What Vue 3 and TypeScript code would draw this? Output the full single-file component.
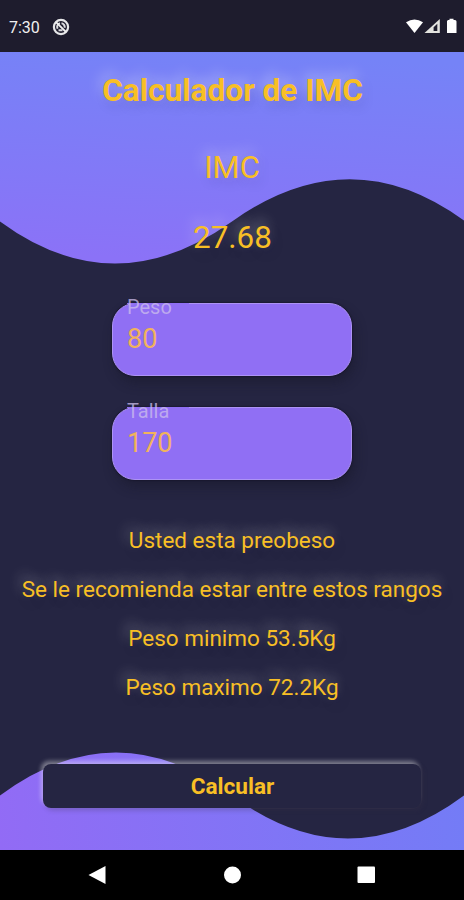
<script setup lang="ts">
import { computed, ref } from 'vue'

const peso = ref<string>('80')
const talla = ref<string>('170')
const resultado = ref({ peso: 80, talla: 170 })

const metros = computed(() => resultado.value.talla / 100)
const imc = computed(() => resultado.value.peso / metros.value ** 2)
const estado = computed(() => {
  if (imc.value < 18.5) return 'Usted esta bajo de peso'
  if (imc.value < 25) return 'Usted esta normal'
  if (imc.value < 30) return 'Usted esta preobeso'
  return 'Usted esta obeso'
})
const minimo = computed(() => (18.5 * metros.value ** 2).toFixed(1))
// Rounded down so that the limit stays inside the healthy range
const maximo = computed(() => (Math.floor(24.99 * metros.value ** 2 * 10) / 10).toFixed(1))

function calcular() {
  const p = Number(peso.value)
  const t = Number(talla.value)
  if (p > 0 && t > 0) resultado.value = { peso: p, talla: t }
}
</script>

<template>
  <div class="phone">
    <header class="status">
      <span class="clock">7:30</span>
      <svg class="dnd" width="18" height="18" viewBox="0 0 18 18">
        <circle cx="9" cy="9" r="7.1" fill="none" stroke="#e6e6e8" stroke-width="2.2" />
        <path d="M5.6 10.800A3.800 3.800 0 0 1 8 5.300M9.500 5.300A3.700 3.700 0 0 1 12.600 9.800M6.500 12.300H10.500" fill="none" stroke="#dcdcdf" stroke-width="2" />
        <path d="M4 4.2 14 14" stroke="#f1f1f1" stroke-width="1.8" />
      </svg>
      <span class="grow"></span>
      <svg width="52" height="18" viewBox="0 0 52 18">
        <path d="M0 4.3Q8.5-1.5 17 4.3L8.5 15Z" fill="#fff" />
        <path d="M33.8 1V15H18.5Z" fill="#e3e3df" />
        <path d="M31.300 5.800V13H27.600V9.300Z" fill="#1d1c2c" />
        <path d="M42 2h1.5V.7h4V2H49q1.500 0 1.500 1.500V15H41V3Z" fill="#fff" />
      </svg>
    </header>

    <main class="screen">
      <svg class="waves" width="464" height="798" viewBox="0 0 464 798">
        <defs>
          <linearGradient id="topFill" gradientUnits="userSpaceOnUse" x1="240" y1="0" x2="228" y2="212">
            <stop offset="0" stop-color="#7583f7" />
            <stop offset="1" stop-color="#8b72f7" />
          </linearGradient>
          <linearGradient id="bottomFill" gradientUnits="userSpaceOnUse" x1="0" y1="798" x2="464" y2="715">
            <stop offset="0" stop-color="#926bf5" />
            <stop offset="1" stop-color="#737cf6" />
          </linearGradient>
        </defs>
        <path d="M0 0H464V168.500Q350 85.500 232 169.500T0 169.500Z" fill="url(#topFill)" />
        <path d="M0 743.500Q116 657.500 232 743.500T464 743.500V798H0Z" fill="url(#bottomFill)" />
      </svg>

      <div class="content">
        <h1 class="title">Calculador de IMC</h1>
        <p class="label">IMC</p>
        <p class="value">{{ imc.toFixed(2) }}</p>

        <form class="fields" @submit.prevent="calcular">
          <label class="field">
            <span class="caption">Peso</span>
            <input v-model="peso" class="entry" inputmode="numeric" />
          </label>
          <label class="field">
            <span class="caption">Talla</span>
            <input v-model="talla" class="entry" inputmode="numeric" />
          </label>
        </form>

        <section class="advice">
          <p>{{ estado }}</p>
          <p>Se le recomienda estar entre estos rangos</p>
          <p>Peso minimo {{ minimo }}Kg</p>
          <p>Peso maximo {{ maximo }}Kg</p>
        </section>

        <button class="action" type="button" @click="calcular">Calcular</button>
      </div>
    </main>

    <nav class="nav">
      <svg width="464" height="50" viewBox="0 0 464 50">
        <path d="M88.500 25 105.500 16V34Z" fill="#fff" />
        <circle cx="232.500" cy="25" r="8.500" fill="#fff" />
        <rect x="357.500" y="16.500" width="17.500" height="16.500" rx="1" fill="#fff" />
      </svg>
    </nav>
  </div>
</template>

<style>
body {
  margin: 0;
  background: #252542;
}
</style>

<style scoped>
.phone {
  display: flex;
  flex-direction: column;
  width: 464px;
  height: 900px;
  overflow: hidden;
  font-family: Roboto, "Liberation Sans", sans-serif;
  color: #f8bf25;
  background: #252542;
}
.status {
  display: flex;
  align-items: center;
  box-sizing: border-box;
  height: 52px;
  padding: 2px 6px 0 9px;
  background: #1e1c2d;
}
.clock {
  width: 43px;
  font-size: 16px;
  color: #f0f0f0;
}
.grow {
  flex: 1;
}
.screen {
  display: grid;
  height: 798px;
}
.waves,
.content {
  grid-area: 1 / 1;
}
.content {
  display: flex;
  flex-direction: column;
  align-items: center;
  z-index: 1;
}
.title,
.label,
.value,
.advice p {
  margin: 0;
  white-space: nowrap;
  text-shadow: -3px -6px 13px rgba(255, 255, 255, 0.36), 3px 5px 12px rgba(30, 25, 70, 0.15);
}
.title {
  margin-top: 20px;
  padding-left: 1px;
  font-size: 31.6px;
  line-height: 38px;
  font-weight: 700;
}
.label {
  margin-top: 39px;
  font-size: 31px;
  line-height: 38px;
}
.value {
  margin-top: 32px;
  padding-left: 1px;
  font-size: 31.4px;
  line-height: 38px;
}
.fields {
  display: flex;
  flex-direction: column;
  gap: 31px;
  margin-top: 46px;
}
.field {
  display: flex;
  flex-direction: column;
  box-sizing: border-box;
  width: 240px;
  height: 73px;
  padding: 0 14px;
  border: 1px solid #ad93f5;
  border-radius: 23px;
  background: #906ff4;
  box-shadow: 0 0 2px #0c0b1d, 3px 7px 12px rgba(20, 20, 35, 0.4);
}
/* The label interrupts the outline from its first letter to just past its end */
.caption {
  width: 62px;
  height: 18px;
  margin-top: -7px;
  font-size: 20px;
  line-height: 20px;
  color: rgba(204, 190, 236, 0.75);
  background: linear-gradient(#906ff4, #906ff4) 0 6px / 100% 1px no-repeat;
}
.entry {
  width: 100%;
  height: 32px;
  margin-top: 8px;
  padding: 0;
  border: 0;
  outline: 0;
  font: 400 27px/32px Roboto, "Liberation Sans", sans-serif;
  color: #f1b35c;
  background: transparent;
}
.advice {
  display: flex;
  flex-direction: column;
  align-items: center;
  gap: 21px;
  margin-top: 46px;
  font-size: 22.5px;
  line-height: 28px;
}
.action {
  width: 378px;
  height: 44px;
  margin-top: 63px;
  padding: 1px 0 0 1px;
  border: 0;
  border-radius: 8px;
  font: 700 22.6px/43px Roboto, "Liberation Sans", sans-serif;
  color: #f8bf25;
  background: #252542;
  box-shadow: -2px -3px 4px rgba(255, 255, 255, 0.4), 2px 2px 5px rgba(55, 50, 70, 0.3);
}
.nav {
  height: 50px;
  background: #000;
}
.nav svg {
  display: block;
}
</style>
